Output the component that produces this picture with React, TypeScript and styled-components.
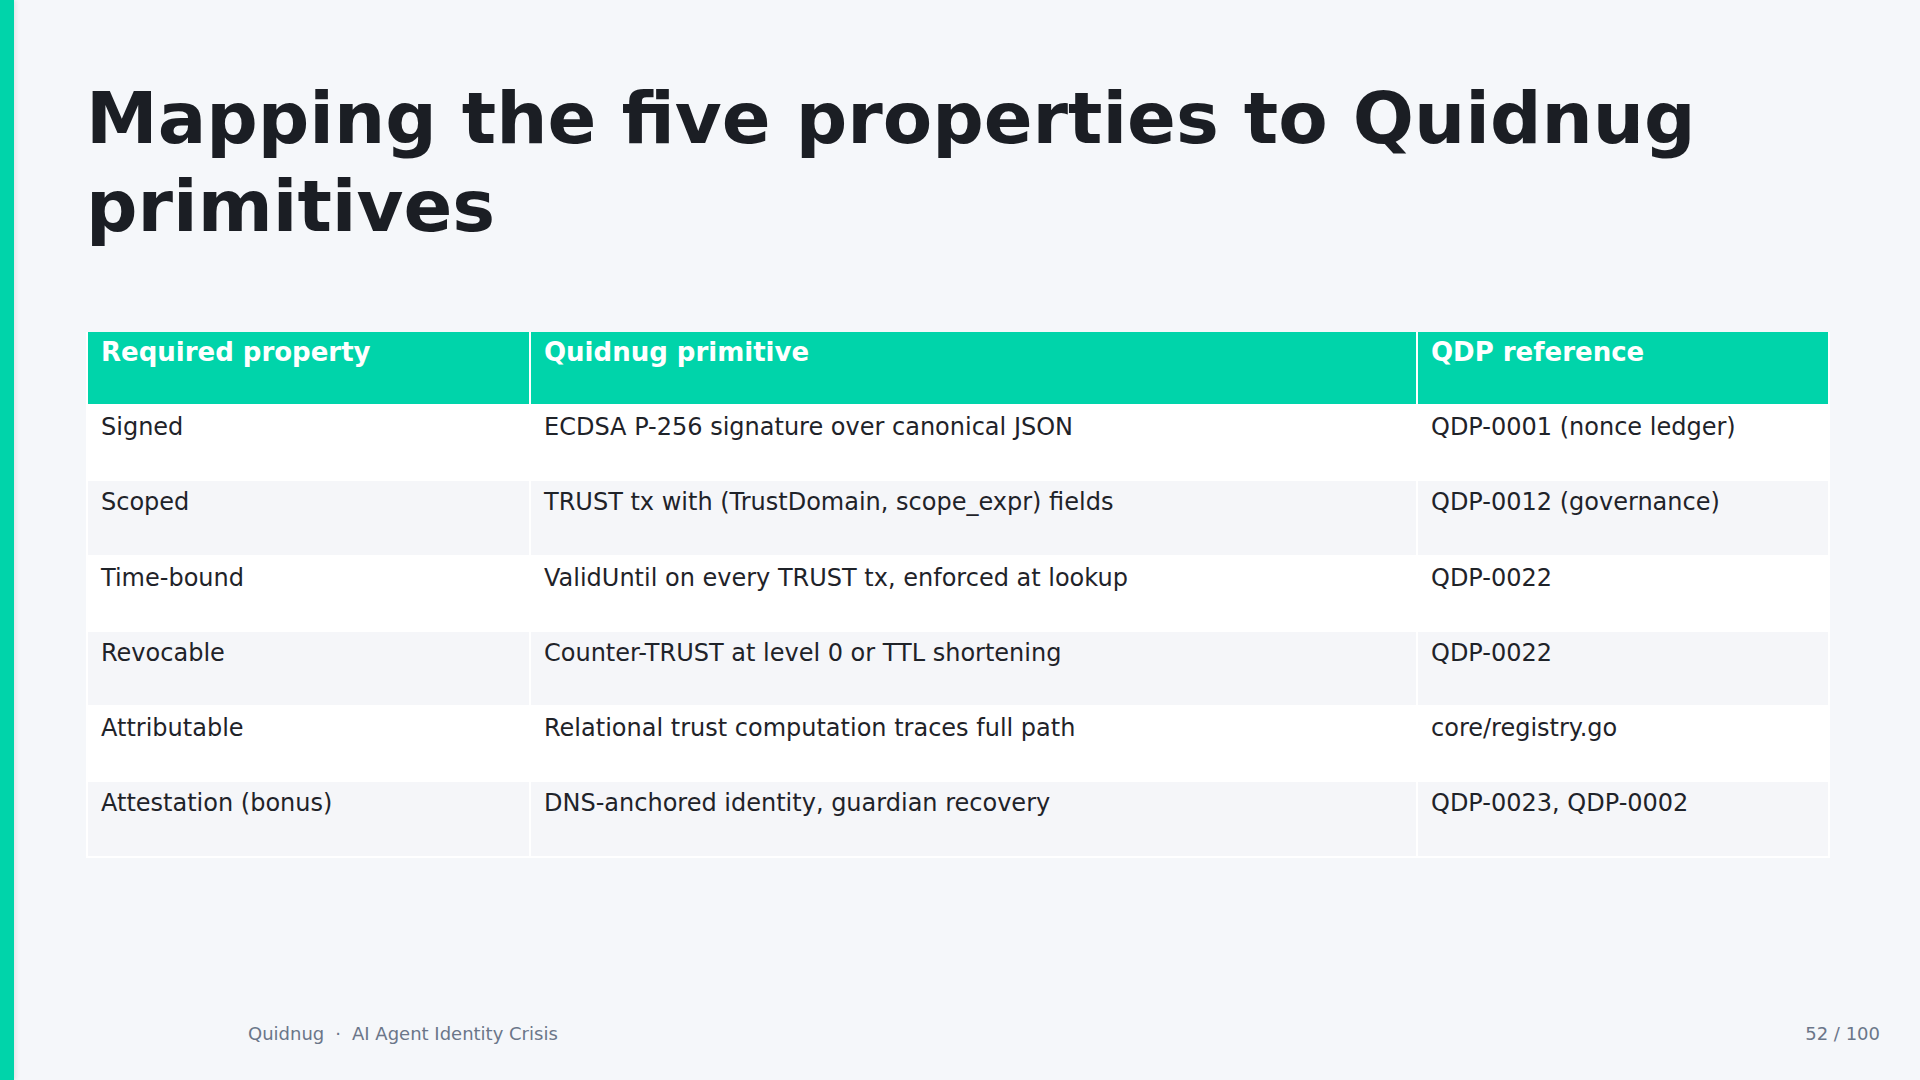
import React from "react";
import styled, { createGlobalStyle } from "styled-components";

const GlobalStyle = createGlobalStyle`
  html, body {
    margin: 0;
    padding: 0;
    background: #f5f7fa;
  }
  body {
    font-family: "DejaVu Sans", "Noto Sans", sans-serif;
  }
`;

const Slide = styled.div`
  width: 1920px;
  height: 1080px;
  display: flex;
  background: #f5f7fa;
  overflow: hidden;
`;

const AccentBar = styled.div`
  width: 14px;
  flex: 0 0 14px;
  background: #00d4aa;
  box-shadow: 2px 0 4px rgba(0, 0, 0, 0.08);
`;

const Main = styled.div`
  flex: 1;
  display: flex;
  flex-direction: column;
`;

const Content = styled.div`
  padding: 74px 0 0 72px;
  display: flex;
  flex-direction: column;
`;

const Title = styled.h1`
  margin: 0;
  font-family: "DejaVu Sans", sans-serif;
  font-weight: 700;
  font-size: 72px;
  line-height: 88px;
  color: #1b1e24;
  width: 1700px;
`;

const Table = styled.table`
  margin-top: 82px;
  width: 1742px;
  border-collapse: collapse;
  table-layout: fixed;
  font-family: "DejaVu Sans", sans-serif;
  font-size: 24px;
  line-height: 1.2;
`;

const HeadCell = styled.th<{ $w: number }>`
  width: ${(p) => p.$w}px;
  height: 73px;
  box-sizing: border-box;
  background: #00d4aa;
  color: #ffffff;
  font-size: 26px;
  font-weight: 700;
  text-align: left;
  vertical-align: top;
  padding: 5px 13px;
  border: 2px solid #ffffff;
  border-top: none;
`;

const Row = styled.tr<{ $alt: boolean }>`
  background: ${(p) => (p.$alt ? "#f5f6f9" : "#ffffff")};
`;

const Cell = styled.td`
  height: 75.3px;
  box-sizing: border-box;
  color: #1f2329;
  vertical-align: top;
  padding: 7px 13px;
  border: 2px solid #ffffff;
`;

const Footer = styled.div`
  margin-top: auto;
  display: flex;
  justify-content: space-between;
  align-items: center;
  padding: 0 40px 34px 234px;
  font-family: "DejaVu Sans", sans-serif;
  font-size: 18px;
  line-height: 24px;
  color: #6b7689;
`;

const FooterLeft = styled.div`
  display: flex;
`;

const Dot = styled.span`
  margin: 0 11px;
`;

const rows: [string, string, string][] = [
  ["Signed", "ECDSA P-256 signature over canonical JSON", "QDP-0001 (nonce ledger)"],
  ["Scoped", "TRUST tx with (TrustDomain, scope_expr) fields", "QDP-0012 (governance)"],
  ["Time-bound", "ValidUntil on every TRUST tx, enforced at lookup", "QDP-0022"],
  ["Revocable", "Counter-TRUST at level 0 or TTL shortening", "QDP-0022"],
  ["Attributable", "Relational trust computation traces full path", "core/registry.go"],
  ["Attestation (bonus)", "DNS-anchored identity, guardian recovery", "QDP-0023, QDP-0002"],
];

export default function App() {
  return (
    <>
      <GlobalStyle />
      <Slide>
        <AccentBar />
        <Main>
          <Content>
            <Title>Mapping the five properties to Quidnug primitives</Title>
            <Table>
              <thead>
                <tr>
                  <HeadCell $w={443}>Required property</HeadCell>
                  <HeadCell $w={887}>Quidnug primitive</HeadCell>
                  <HeadCell $w={412}>QDP reference</HeadCell>
                </tr>
              </thead>
              <tbody>
                {rows.map((r, i) => (
                  <Row key={r[0]} $alt={i % 2 === 1}>
                    <Cell>{r[0]}</Cell>
                    <Cell>{r[1]}</Cell>
                    <Cell>{r[2]}</Cell>
                  </Row>
                ))}
              </tbody>
            </Table>
          </Content>
          <Footer>
            <FooterLeft>
              <span>Quidnug</span>
              <Dot>·</Dot>
              <span>AI Agent Identity Crisis</span>
            </FooterLeft>
            <span>52 / 100</span>
          </Footer>
        </Main>
      </Slide>
    </>
  );
}
